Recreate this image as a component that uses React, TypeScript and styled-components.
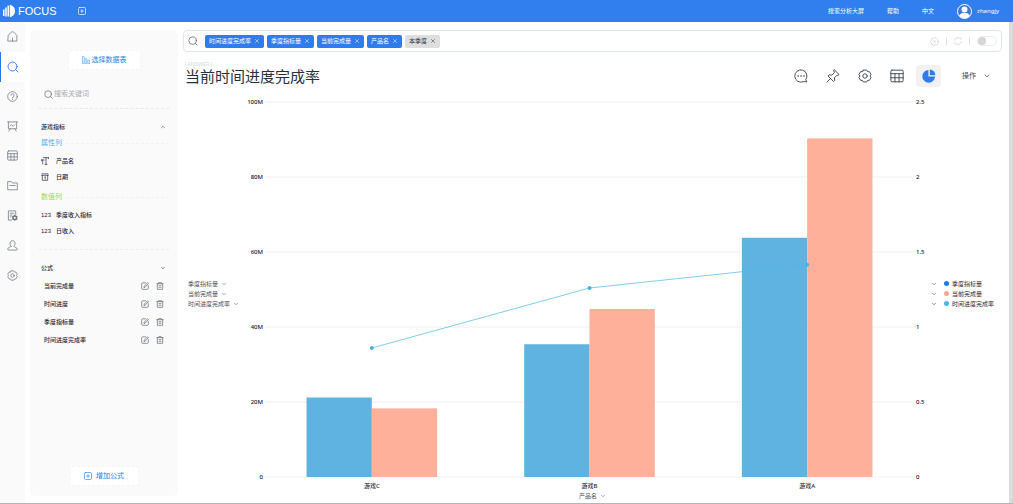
import React from "react";
import styled, { createGlobalStyle } from "styled-components";
import { ChevronDown, ChevronUp, X } from "lucide-react";

const sans = `"Noto Sans", "Noto Sans CJK SC", sans-serif`;

const GlobalStyle = createGlobalStyle`
  *, *::before, *::after { box-sizing: border-box; }
  body { margin: 0; background: #fff; color: #1f2a3a; font: 6px/10px ${sans}; }
  button, input { font: inherit; color: inherit; margin: 0; padding: 0; border: 0; background: none; }
  button { cursor: pointer; white-space: nowrap; }
  a { color: inherit; text-decoration: none; }
  h1, h2, h3, ul { margin: 0; padding: 0; font: inherit; list-style: none; }
  svg { display: block; flex: none; }
`;

const Page = styled.div`
  min-height: 100vh;
  display: flex;
  flex-direction: column;
  border-bottom: 1px solid #b5b5b5;
`;

const Header = styled.header`
  height: 22px;
  display: flex;
  align-items: center;
  padding: 0 14px 0 3px;
  background: #317fee;
  color: #fff;
`;

const Brand = styled.a`
  display: flex;
  align-items: center;
  gap: 3px;
  font: 11px/22px "Liberation Sans", sans-serif;
`;

const NewTab = styled.button`
  margin-left: 21px;
`;

const HeaderNav = styled.nav`
  margin-left: auto;
  display: flex;
  align-items: center;
  gap: 23px;
`;

const Account = styled.a`
  display: flex;
  align-items: center;
  gap: 5px;
`;

const Body = styled.div`
  flex: 1;
  display: flex;
  gap: 5px;
`;

const Rail = styled.nav`
  flex: none;
  width: 25px;
  background: #fafafa;
`;

const RailList = styled.ul`
  display: grid;
  grid-template-rows: repeat(9, 1fr);
  height: 268px;
`;

const RailLink = styled.a<{ $active?: boolean }>`
  height: 100%;
  display: flex;
  align-items: center;
  justify-content: center;
  box-shadow: ${(p) => (p.$active ? "inset 1px 0 #2476f2" : "none")};
  background: ${(p) => (p.$active ? "#fff" : "transparent")};
  color: ${(p) => (p.$active ? "#2f7fee" : "#69727d")};
`;

const Sidebar = styled.aside`
  flex: none;
  width: 148px;
  margin: 8px 0 7px;
  padding: 20px 9px 10px;
  display: flex;
  flex-direction: column;
  border-radius: 5px;
  background: #fafafa;
`;

const PanelButton = styled.button<{ $bottom?: boolean }>`
  align-self: center;
  width: ${(p) => (p.$bottom ? 69 : 73)}px;
  height: 20px;
  margin-top: ${(p) => (p.$bottom ? "auto" : "0")};
  display: flex;
  align-items: center;
  justify-content: center;
  gap: ${(p) => (p.$bottom ? 4 : 2)}px;
  border: 1px dashed #f4f4f4;
  border-radius: 2px;
  background: #fff;
  color: #2b7de9;
  font-size: 7px;
`;

const FieldSearch = styled.label`
  height: 25px;
  margin-top: 14px;
  padding: 0 5px 4px;
  display: flex;
  align-items: center;
  gap: 1px;
  border-bottom: 1px dashed #e6e9eb;
  color: #5b6470;

  input {
    min-width: 0;
    flex: 1;
    outline: 0;
    font-size: 7px;
  }
  input::placeholder { color: #a8adb2; opacity: 1; }
`;

const SectionTitle = styled.button`
  width: 100%;
  height: 16px;
  margin-top: 10px;
  padding: 0 3px 0 2px;
  display: flex;
  align-items: center;
  justify-content: space-between;
  font-weight: 500;
`;

const GroupLabel = styled.h3<{ $color: string; $spaced?: boolean }>`
  height: 16px;
  margin: ${(p) => (p.$spaced ? 4 : 0)}px 0 2px;
  padding-left: 2px;
  display: flex;
  align-items: center;
  gap: 4px;
  color: ${(p) => p.$color};
  font-size: 7px;

  &::after {
    content: "";
    flex: 1;
    border-top: 1px dashed #eff1f2;
  }
`;

const Field = styled.li`
  height: 16px;
  padding-left: 2px;
  display: flex;
  align-items: center;
  gap: 6px;
  font-weight: 500;
`;

const FieldType = styled.span`
  width: 9px;
  font-family: "Liberation Sans", sans-serif;
  font-weight: 400;
`;

const Divider = styled.hr`
  width: 100%;
  margin: 10px 0 0;
  border: 0;
  border-top: 1px dashed #ebedef;
`;

const FormulaList = styled.ul`
  padding: 1px 5px 0;
`;

const Formula = styled.li`
  height: 18px;
  display: flex;
  align-items: center;
  gap: 7px;
  font-weight: 500;

  span { flex: 1; }
  button { color: #68717c; }
`;

const Main = styled.main`
  flex: 1;
  min-width: 0;
  padding: 8px 2px 2px 0;
  display: flex;
  flex-direction: column;
`;

const Scrollbar = styled.div`
  flex: none;
  width: 4px;
  background: #dcdcdc;
`;

const QueryBar = styled.div`
  height: 22px;
  padding: 0 4px;
  display: flex;
  align-items: center;
  gap: 3px;
  border: 1px solid #dfe6ea;
  border-radius: 4px;
  color: #5b6470;
`;

const QueryIcon = styled.span`
  width: 14px;
`;

const Chip = styled.button<{ $muted?: boolean }>`
  height: 13px;
  padding: 0 4px;
  display: flex;
  align-items: center;
  gap: 3px;
  border-radius: 2px;
  background: ${(p) => (p.$muted ? "#dedede" : "#2f7cec")};
  color: ${(p) => (p.$muted ? "#2b3440" : "#fff")};
`;

const QueryTools = styled.div`
  margin-left: auto;
  display: flex;
  align-items: center;
  gap: 7px;
  color: #c4c9cd;
`;

const Separator = styled.span`
  width: 1px;
  height: 8px;
  background: #dde2e6;
`;

const Switch = styled.input`
  appearance: none;
  width: 20px;
  height: 10px;
  border: 1px solid #ebedef !important;
  border-radius: 5px;
  display: flex;
  align-items: center;

  &::before {
    content: "";
    width: 8px;
    height: 8px;
    border-radius: 50%;
    background: #d6d6d6;
  }
`;

const TitleRow = styled.div`
  height: 28px;
  margin: 8px 0 14px;
  padding: 0 11px 0 2px;
  display: flex;
  justify-content: space-between;
`;

const Kind = styled.p`
  margin: 0;
  font: 5px/8px "Liberation Sans", sans-serif;
  color: #d3d6da;
`;

const Title = styled.h1`
  font-size: 15px;
  line-height: 16px;
  color: #28303c;
`;

const Toolbar = styled.div`
  display: flex;
  align-items: center;
  gap: 7px;
  padding-top: 4px;
  color: #3a4450;
`;

const Tool = styled.button<{ $active?: boolean }>`
  width: 25px;
  height: 22px;
  display: flex;
  align-items: center;
  justify-content: center;
  border-radius: 4px;
  background: ${(p) => (p.$active ? "#f1f1f1" : "transparent")};
  color: ${(p) => (p.$active ? "#2f7cec" : "inherit")};
`;

const Actions = styled.button`
  margin-left: 14px;
  display: flex;
  align-items: center;
  gap: 7px;
  font-size: 7px;
`;

const Chart = styled.section`
  flex: 1;
  display: grid;
  grid-template-columns: 64px 16px minmax(0, 1fr) 15px 71px;
  grid-template-rows: minmax(300px, 1fr) auto auto;
`;

const Measures = styled.div`
  padding: 9px 0 0 5px;
  display: flex;
  flex-direction: column;
  justify-content: center;
  align-items: flex-start;
  color: #4a525c;
`;

const Dropdown = styled.button`
  height: 10px;
  display: flex;
  align-items: center;
  gap: 3px;
`;

const Ticks = styled.div<{ $left?: boolean }>`
  margin: -5px 0;
  display: flex;
  flex-direction: column;
  justify-content: space-between;
  align-items: ${(p) => (p.$left ? "flex-end" : "flex-start")};
  font-weight: 500;
  color: #111a26;
`;

const PlotCell = styled.div`
  position: relative;
`;

const Plot = styled.svg`
  position: absolute;
  inset: 0;
  width: 100%;
  height: 100%;
  overflow: visible;
`;

const Legend = styled.div`
  padding-top: 8px;
  display: flex;
  flex-direction: column;
  justify-content: center;
`;

const LegendItem = styled.button`
  height: 10px;
  display: flex;
  align-items: center;
`;

const Dot = styled.span<{ $color: string }>`
  width: 5px;
  height: 5px;
  margin: 0 3px 0 7px;
  border-radius: 50%;
  background: ${(p) => p.$color};
`;

const Categories = styled.div`
  grid-column: 3;
  padding-top: 4px;
  display: grid;
  grid-template-columns: repeat(3, 1fr);
  text-align: center;
  font-weight: 500;
`;

const AxisName = styled.div`
  grid-column: 3;
  display: flex;
  justify-content: center;
  padding-left: 6px;
  color: #4a525c;
`;

type IconProps = { size?: number; width?: number; children: React.ReactNode };

const Icon = ({ size = 11, width = 1.6, children }: IconProps) => (
  <svg width={size} height={size} viewBox="0 0 24 24" fill="none" stroke="currentColor"
    strokeWidth={width} strokeLinecap="round" strokeLinejoin="round" aria-hidden="true">
    {children}
  </svg>
);

const SearchIcon = ({ size = 11 }: { size?: number }) => (
  <Icon size={size} width={1.8}><circle cx="11" cy="11" r="9" /><path d="M17.500 17.500l4.500 4.500" /></Icon>
);
const HomeIcon = () => (
  <Icon><path d="M2.500 10c0-.8.3-1.300.9-1.800L10.500 2c1-.8 2-.8 3 0l7.100 6.200c.6.5.9 1 .9 1.800V22h-19z" /><path d="M12 22v-7" /></Icon>
);
const HelpIcon = () => (
  <Icon><circle cx="12" cy="12" r="10.500" /><path d="M8.500 9.500a3.500 3.500 0 1 1 5 3.100c-1 .5-1.500 1.100-1.500 2.400M12 18v.5" /></Icon>
);
const BoardIcon = () => (
  <Icon><path d="M1.500 2h21M3 2v15h18V2M7 17l-3 5M17 17l3 5M7 11l2.500-3 4 3.500L17 8" /></Icon>
);
const TableIcon = ({ size = 11 }: { size?: number }) => (
  <Icon size={size}><rect x="1.500" y="2" width="21" height="20" rx="2" /><path d="M1.500 8h21M1.500 15h21M8.500 8v14M15.500 8v14" /></Icon>
);
const FolderIcon = () => (
  <Icon><path d="M1.500 20.500v-17h8l2.500 3h10.500v14zM6 12h12" /></Icon>
);
const ReportIcon = () => (
  <Icon><path d="M10 22H3V2h16v8M7 7h8M7 11h4M7 15h2" /><circle cx="17" cy="17" r="4" strokeWidth="3" /><path d="M17 11v2M17 21v2M11.500 14l2 1M20.500 19l2 1M11.500 20l2-1M20.500 15l2-1" /></Icon>
);
const UserIcon = () => (
  <Icon><path d="M9 14C5 10 5.500 1.500 12 1.500S19 10 15 14c0 2 7.500 1.500 7.500 6 0 1-.5 2-2 2h-17c-1.500 0-2-1-2-2C1.500 15.500 9 16 9 14z" /></Icon>
);
const GearIcon = ({ size = 11 }: { size?: number }) => (
  <Icon size={size}>
    <path d="M9.200 1.800h5.600l1.600 2.700 3.200.1 2.700 4.700L20.700 12l1.600 2.700-2.700 4.700-3.200.1-1.600 2.700H9.200l-1.600-2.700-3.200-.1-2.700-4.700L3.300 12 1.700 9.300l2.700-4.700 3.200-.1z" />
    <circle cx="12" cy="12" r="3.800" />
  </Icon>
);
const PlusBox = ({ size = 8 }: { size?: number }) => (
  <Icon size={size} width={2}><rect x="1.500" y="1.500" width="21" height="21" rx="3" /><path d="M12 8v8M8 12h8" /></Icon>
);
const ChatIcon = () => (
  <Icon size={14}><path d="M20.500 18A10.500 10.500 0 1 0 16 21.700l5.500.3z" /><path d="M7 12h.2M12 12h.2M17 12h.2" strokeWidth="2.600" /></Icon>
);
const PinIcon = () => (
  <Icon size={14}><path d="M14.500 1.500l8 8-2 1.500-1.500-.5-4.500 4.500.5 4.500-2 2L3.500 12l2-2 4.500.5L14.500 6l-1-2.500zM8 16l-6.500 6.500" /></Icon>
);
const PieIcon = () => (
  <svg width="14" height="14" viewBox="0 0 24 24" fill="currentColor" aria-hidden="true">
    <path d="M11 1.500v11.500h11.500A11 11 0 1 1 11 1.500z" /><path d="M13.500 1a10 10 0 0 1 9.500 9.500h-9.500z" />
  </svg>
);
const EditIcon = () => (
  <Icon size={8} width={2.2}><path d="M14 2.500H5a3 3 0 0 0-3 3V19a3 3 0 0 0 3 3h14a3 3 0 0 0 3-3v-8M9 16l1-4L20 2l2.500 2.500L13 15z" /></Icon>
);
const TrashIcon = () => (
  <Icon size={8} width={2.2}><path d="M2.500 5h19M8 5V2h8V5M4 5v17h16V5M9 11h6M9 16h6" /></Icon>
);
const TextType = () => (
  <Icon size={8} width={2}><path d="M7 2h16M15 2v20M12 22h6M1 9h9M5 9v12M23 2v3M1 9v2" /></Icon>
);
const DateType = () => (
  <Icon size={8} width={2}><path d="M2 7h20M4 7v15h16V7M3 2.500h18M11 12l2-1v7" /></Icon>
);
const DataIcon = () => (
  <Icon size={8} width={1.4}><path d="M1.500 22V2h5v20zM9.500 22V8h5v14zM17.500 22v-9h5v9z" /></Icon>
);
const Down = () => <ChevronDown size={6} strokeWidth={2} />;

const railItems: [string, React.ReactNode][] = [
  ["首页", <HomeIcon />],
  ["搜索", <SearchIcon size={12} />],
  ["帮助", <HelpIcon />],
  ["看板", <BoardIcon />],
  ["数据表", <TableIcon />],
  ["资源", <FolderIcon />],
  ["报告", <ReportIcon />],
  ["用户", <UserIcon />],
  ["设置", <GearIcon />],
];

const chips = ["时间进度完成率", "季度指标量", "当前完成量", "产品名", "本季度"];
const formulas = ["当前完成量", "时间进度", "季度指标量", "时间进度完成率"];
const series = [
  { name: "季度指标量", color: "#1c7be6" },
  { name: "当前完成量", color: "#ffa58c" },
  { name: "时间进度完成率", color: "#4bb9e6" },
];
const data = [
  { name: "游戏C", target: 21.2, done: 18.3, rate: 0.86 },
  { name: "游戏B", target: 35.4, done: 44.8, rate: 1.26 },
  { name: "游戏A", target: 63.8, done: 90.3, rate: 1.415 },
];

const pct = (n: number) => `${n}%`;
const centre = (i: number) => ((i + 0.5) * 100) / data.length;
const barWidth = 10;
const rateY = (rate: number) => 100 - (rate / 2.5) * 100;

const ComboPlot = () => (
  <Plot role="img" aria-label="当前时间进度完成率">
    {[0, 20, 40, 60, 80, 100].map((y) => (
      <line key={y} x1="2" x2="100%" y1={pct(y)} y2={pct(y)} stroke="#eff0f2" />
    ))}
    {data.map((d, i) => (
      <g key={d.name}>
        <rect x={pct(centre(i) - barWidth)} y={pct(100 - d.target)} width={pct(barWidth)} height={pct(d.target)} fill="#5eb3e1" />
        <rect x={pct(centre(i))} y={pct(100 - d.done)} width={pct(barWidth)} height={pct(d.done)} fill="#ffb09a" />
      </g>
    ))}
    {data.slice(1).map((d, i) => (
      <line key={d.name} x1={pct(centre(i))} y1={pct(rateY(data[i].rate))} x2={pct(centre(i + 1))} y2={pct(rateY(d.rate))}
        stroke="#4bb9e6" strokeOpacity="0.7" />
    ))}
    {data.map((d, i) => (
      <circle key={d.name} cx={pct(centre(i))} cy={pct(rateY(d.rate))} r="2" fill="#4bb0e4" />
    ))}
  </Plot>
);

export default function App() {
  return (
    <>
      <GlobalStyle />
      <Page>
        <Header>
          <Brand href="#">
            <svg width="12" height="12" viewBox="0 0 24 24" fill="#fff" aria-hidden="true">
              <path d="M0 9h3v13H0zM4.500 5h3v18h-3zM9 1h3v22H9zM13.500 0C19 0 24 5 24 12s-5 12-10.500 12z" />
            </svg>
            FOCUS
          </Brand>
          <NewTab aria-label="新建"><PlusBox /></NewTab>
          <HeaderNav>
            <a href="#">搜索分析大屏</a>
            <a href="#">帮助</a>
            <a href="#">中文</a>
            <Account href="#">
              <svg width="15" height="15" viewBox="0 0 30 30" aria-hidden="true">
                <circle cx="15" cy="15" r="14" fill="#3d79cf" stroke="#fff" strokeWidth="2" />
                <circle cx="15" cy="11" r="6" fill="#fff" />
                <path d="M4 24c2-5 6-6 11-6s9 1 11 6c-6 6-16 6-22 0z" fill="#fff" />
              </svg>
              zhangjy
            </Account>
          </HeaderNav>
        </Header>
        <Body>
          <Rail>
            <RailList>
              {railItems.map(([label, icon], i) => (
                <li key={label}><RailLink href="#" aria-label={label} $active={i === 1}>{icon}</RailLink></li>
              ))}
            </RailList>
          </Rail>
          <Sidebar>
            <PanelButton><DataIcon />选择数据表</PanelButton>
            <FieldSearch>
              <SearchIcon size={9} />
              <input type="text" placeholder="搜索关键词" aria-label="搜索关键词" />
            </FieldSearch>
            <SectionTitle>游戏指标<ChevronUp size={6} strokeWidth={2} /></SectionTitle>
            <GroupLabel $color="#4fb0ec">属性列</GroupLabel>
            <ul>
              <Field><FieldType><TextType /></FieldType>产品名</Field>
              <Field><FieldType><DateType /></FieldType>日期</Field>
            </ul>
            <GroupLabel $color="#9bd84f" $spaced>数值列</GroupLabel>
            <ul>
              <Field><FieldType>123</FieldType>季度收入指标</Field>
              <Field><FieldType>123</FieldType>日收入</Field>
            </ul>
            <Divider />
            <SectionTitle>公式<Down /></SectionTitle>
            <FormulaList>
              {formulas.map((f) => (
                <Formula key={f}>
                  <span>{f}</span>
                  <button aria-label={`编辑${f}`}><EditIcon /></button>
                  <button aria-label={`删除${f}`}><TrashIcon /></button>
                </Formula>
              ))}
            </FormulaList>
            <PanelButton $bottom><PlusBox />增加公式</PanelButton>
          </Sidebar>
          <Main>
            <QueryBar>
              <QueryIcon><SearchIcon size={10} /></QueryIcon>
              {chips.map((c, i) => (
                <Chip key={c} $muted={i === chips.length - 1}>{c}<X size={6} strokeWidth={2} /></Chip>
              ))}
              <QueryTools>
                <button aria-label="清除"><Icon size={9}><circle cx="12" cy="12" r="10" /><path d="M9 9l6 6M15 9l-6 6" /></Icon></button>
                <Separator />
                <button aria-label="刷新"><Icon size={8} width={2}><path d="M2 10C3 5 7 2 12 2c4 0 7 2 9 5V2M22 14c-1 5-5 8-10 8-4 0-7-2-9-5v5" /></Icon></button>
                <Separator />
                <Switch type="checkbox" aria-label="自动搜索" />
              </QueryTools>
            </QueryBar>
            <TitleRow>
              <div>
                <Kind>[ ANSWER ]</Kind>
                <Title>当前时间进度完成率</Title>
              </div>
              <Toolbar>
                <Tool aria-label="评论"><ChatIcon /></Tool>
                <Tool aria-label="固定"><PinIcon /></Tool>
                <Tool aria-label="设置"><GearIcon size={14} /></Tool>
                <Tool aria-label="表格"><TableIcon size={14} /></Tool>
                <Tool aria-label="图表" $active><PieIcon /></Tool>
                <Actions>操作<ChevronDown size={8} strokeWidth={2} /></Actions>
              </Toolbar>
            </TitleRow>
            <Chart>
              <Measures>
                {series.map((s) => <Dropdown key={s.name}>{s.name}<Down /></Dropdown>)}
              </Measures>
              <Ticks $left>
                {["100M", "80M", "60M", "40M", "20M", "0"].map((t) => <span key={t}>{t}</span>)}
              </Ticks>
              <PlotCell><ComboPlot /></PlotCell>
              <Ticks>
                {["2.5", "2", "1.5", "1", "0.5", "0"].map((t) => <span key={t}>{t}</span>)}
              </Ticks>
              <Legend>
                {series.map((s) => (
                  <LegendItem key={s.name}><Down /><Dot $color={s.color} />{s.name}</LegendItem>
                ))}
              </Legend>
              <Categories>{data.map((d) => <span key={d.name}>{d.name}</span>)}</Categories>
              <AxisName><Dropdown>产品名<Down /></Dropdown></AxisName>
            </Chart>
          </Main>
          <Scrollbar />
        </Body>
      </Page>
    </>
  );
}
